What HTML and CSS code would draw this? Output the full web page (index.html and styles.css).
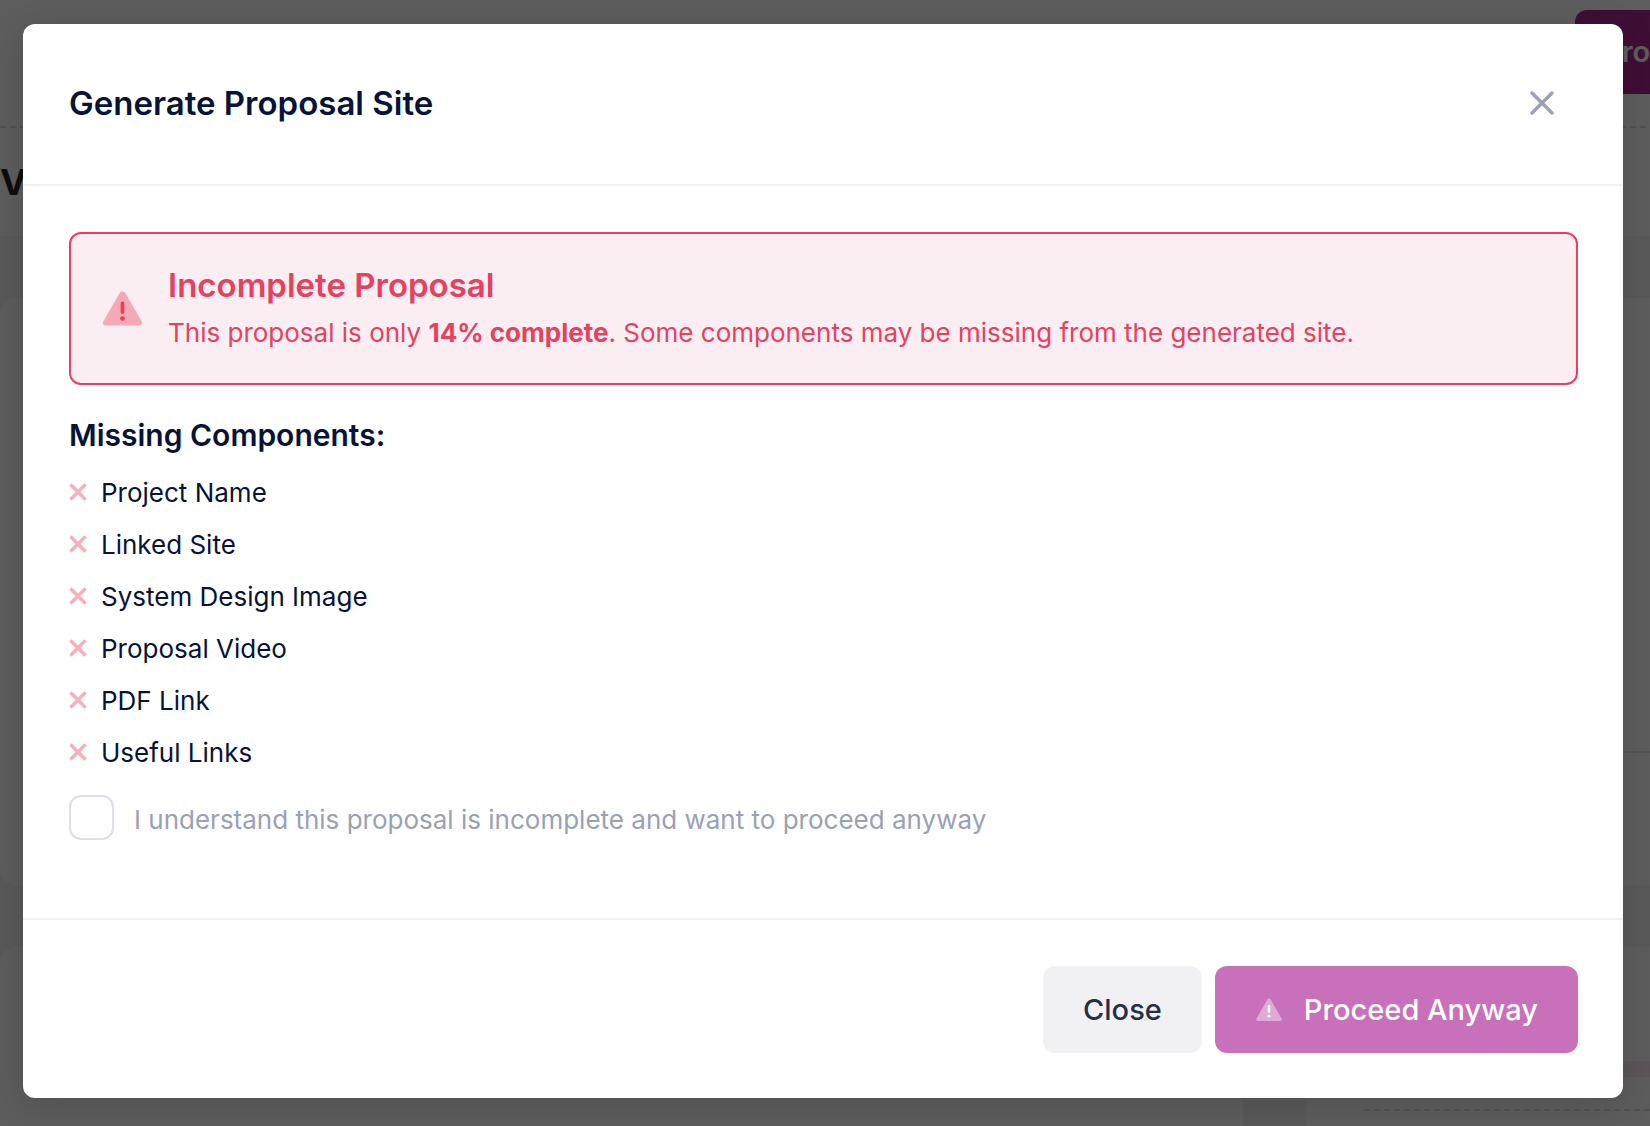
FILE: index.html
```html
<!DOCTYPE html>
<html lang="en">
<head>
    <meta charset="UTF-8">
    <meta name="viewport" content="width=device-width, initial-scale=1.0">
    <title>Generate Proposal Site</title>
    <link rel="stylesheet" href="styles.css">
</head>
<body>

    <!-- Page behind the modal -->
    <div class="page" aria-hidden="true">
        <div class="toolbar">
            <div class="page-action">Prop</div>
        </div>
        <div class="dashed"></div>
        <div class="page-title">V</div>
        <div class="page-content">
            <div class="card card-main">
                <div class="card-line"></div>
            </div>
            <div class="card-row">
                <div class="card card-wide"></div>
                <div class="card card-side">
                    <div class="card-tag"></div>
                    <div class="dashed"></div>
                </div>
            </div>
        </div>
    </div>

    <!-- Modal -->
    <div class="overlay">
        <div class="modal" role="dialog" aria-modal="true" aria-labelledby="modal-title">
            <div class="modal-header">
                <h2 class="modal-title" id="modal-title">Generate Proposal Site</h2>
                <button type="button" class="btn-icon" aria-label="Close dialog">
                    <svg width="24" height="24" viewBox="0 0 24 24"><path d="M2 2L22 22M22 2L2 22"/></svg>
                </button>
            </div>

            <div class="modal-body">
                <div class="alert" role="alert">
                    <svg class="alert-icon" width="52" height="52" viewBox="0 0 52 52">
                        <path class="tri" d="M22.4 10.4C23.8 7.9 27.2 7.9 28.6 10.4L44.5 38C45.7 40.1 44.6 42.5 42 42.5H9C6.4 42.5 5.3 40.1 6.5 38Z"/>
                        <rect class="mark" x="23.6" y="18.5" width="3.8" height="12.5" rx="1.9"/>
                        <circle class="mark" cx="25.5" cy="35.6" r="2.4"/>
                    </svg>
                    <div class="alert-text">
                        <h3 class="alert-title">Incomplete Proposal</h3>
                        <p class="alert-desc">This proposal is only <strong>14% complete</strong>. Some components may be missing from the generated site.</p>
                    </div>
                </div>

                <h4 class="missing-title">Missing Components:</h4>
                <ul class="missing-list">
                    <li><svg width="18" height="18" viewBox="0 0 18 18"><path d="M2.5 2.5L15.5 15.5M15.5 2.5L2.5 15.5"/></svg>Project Name</li>
                    <li><svg width="18" height="18" viewBox="0 0 18 18"><path d="M2.5 2.5L15.5 15.5M15.5 2.5L2.5 15.5"/></svg>Linked Site</li>
                    <li><svg width="18" height="18" viewBox="0 0 18 18"><path d="M2.5 2.5L15.5 15.5M15.5 2.5L2.5 15.5"/></svg>System Design Image</li>
                    <li><svg width="18" height="18" viewBox="0 0 18 18"><path d="M2.5 2.5L15.5 15.5M15.5 2.5L2.5 15.5"/></svg>Proposal Video</li>
                    <li><svg width="18" height="18" viewBox="0 0 18 18"><path d="M2.5 2.5L15.5 15.5M15.5 2.5L2.5 15.5"/></svg>PDF Link</li>
                    <li><svg width="18" height="18" viewBox="0 0 18 18"><path d="M2.5 2.5L15.5 15.5M15.5 2.5L2.5 15.5"/></svg>Useful Links</li>
                </ul>

                <div class="confirm">
                    <input type="checkbox" class="checkbox" id="confirm-incomplete">
                    <label for="confirm-incomplete">I understand this proposal is incomplete and want to proceed anyway</label>
                </div>
            </div>

            <div class="modal-footer">
                <button type="button" class="btn btn-light">Close</button>
                <button type="button" class="btn btn-primary" disabled>
                    <svg width="28" height="28" viewBox="0 0 28 28">
                        <path class="tri" d="M12.4 3.4C13.2 2.1 14.8 2.1 15.6 3.4L26.4 22.3C27.2 23.7 26.5 25 24.9 25H3.1C1.5 25 .8 23.7 1.6 22.3Z"/>
                        <rect class="mark" x="12.7" y="9" width="2.6" height="8" rx="1.3"/>
                        <circle class="mark" cx="14" cy="20" r="1.6"/>
                    </svg>
                    Proceed Anyway
                </button>
            </div>
        </div>
    </div>

    <script>
        const confirmBox = document.getElementById('confirm-incomplete');
        const proceedBtn = document.querySelector('.btn-primary');

        confirmBox.addEventListener('change', () => {
            proceedBtn.disabled = !confirmBox.checked;
        });
    </script>

</body>
</html>
```
FILE: styles.css
```css
* {
    margin: 0;
    padding: 0;
    box-sizing: border-box;
}

body {
    font-family: Inter, sans-serif;
    font-size: 26px;
    line-height: 39px;
    color: #071437;
    background-color: #5d5d5d;
    min-height: 100vh;
    overflow: hidden;
}

/* Page behind the modal */
.page {
    position: absolute;
    inset: 0;
    display: flex;
    flex-direction: column;
    overflow: hidden;
    background-color: #fff;
}

.toolbar {
    display: flex;
    justify-content: flex-end;
    padding: 10px 0 32px;
}

.dashed {
    height: 2px;
    background: repeating-linear-gradient(to right, #dbdfe9 0 6px, transparent 6px 10px);
}

.page-action {
    width: 75px;
    padding: 22px 0 22px 28px;
    overflow: hidden;
    white-space: nowrap;
    font-size: 29px;
    font-weight: 600;
    line-height: 40px;
    color: #fff;
    background-color: #a9278f;
    border-radius: 12px 0 0 12px;
}

.page-title {
    height: 108px;
    padding-top: 35px;
    font-size: 36px;
    font-weight: 700;
    color: #252525;
}

.page-content {
    flex: 1;
    display: flex;
    flex-direction: column;
    gap: 62px;
    padding-top: 62px;
    background-color: #f4f4f4;
}

.card {
    background-color: #fff;
}

.card-main {
    height: 587px;
    padding: 453px 0 0 60px;
    border-radius: 16px 0 0 16px;
}

.card-line {
    border-top: 2px solid #eaeaea;
}

.card-row {
    flex: 1;
    display: flex;
    gap: 63px;
}

.card-wide {
    flex: 1;
    border-radius: 16px 16px 0 0;
}

.card-side {
    width: 344px;
    padding: 114px 0 0 58px;
    border-radius: 16px 0 0 0;
}

.card-tag {
    height: 16px;
    margin-bottom: 32px;
    background-color: #faeaf5;
}

/* Modal */
.overlay {
    position: relative;
    min-height: 100vh;
    padding: 24px 27px 28px 23px;
    background-color: rgba(0, 0, 0, 0.635);
}

.modal {
    background-color: #fff;
    border-radius: 12px;
    box-shadow: 0 8px 36px rgba(0, 0, 0, 0.14);
}

.modal-header {
    display: flex;
    align-items: center;
    justify-content: space-between;
    padding: 43px 45px 45px 46px;
    border-bottom: 2px solid #f1f1f2;
}

.modal-title {
    font-size: 33px;
    font-weight: 600;
    line-height: 40px;
}

.btn-icon {
    display: flex;
    align-items: center;
    justify-content: center;
    width: 72px;
    height: 72px;
    border: 0;
    background: none;
    cursor: pointer;
}

.btn-icon path {
    fill: none;
    stroke: #99a1b7;
    stroke-width: 3.4;
    stroke-linecap: round;
}

.modal-body {
    padding: 46px 45px 46px 46px;
}

.alert {
    display: flex;
    align-items: center;
    gap: 19px;
    padding: 31px 26px;
    color: #e8405f;
    background-color: #fbeef3;
    border: 2px solid #e8405f;
    border-radius: 12px;
}

.alert-icon {
    flex-shrink: 0;
}

.tri {
    fill: currentColor;
    opacity: 0.4;
}

.mark {
    fill: currentColor;
}

.alert-title {
    margin-bottom: 8px;
    font-size: 33px;
    font-weight: 600;
    line-height: 40px;
}

.missing-title {
    margin: 32px 0 13px;
    font-size: 30px;
    font-weight: 600;
    line-height: 36px;
}

.missing-list {
    list-style: none;
}

.missing-list li {
    display: flex;
    align-items: center;
    gap: 14px;
    height: 52px;
}

.missing-list path {
    fill: none;
    stroke: #f7b1be;
    stroke-width: 3.6;
    stroke-linecap: round;
}

.confirm {
    display: flex;
    align-items: center;
    gap: 20px;
    margin: 17px 0 32px;
    color: #99a1b7;
}

.confirm label {
    padding-top: 4px;
}

.checkbox {
    flex-shrink: 0;
    width: 45px;
    height: 45px;
    appearance: none;
    background-color: #fff;
    border: 2px solid #dbdfe9;
    border-radius: 12px;
}

.checkbox:checked {
    background-color: #a9278f;
    border-color: #a9278f;
}

.modal-footer {
    display: flex;
    justify-content: flex-end;
    gap: 13px;
    padding: 46px 45px 45px;
    border-top: 2px solid #f1f1f2;
}

.btn {
    display: flex;
    align-items: center;
    gap: 21px;
    padding: 22px 40px;
    font-family: inherit;
    font-size: 29px;
    font-weight: 500;
    line-height: 43px;
    border: 0;
    border-radius: 12px;
    cursor: pointer;
}

.btn-light {
    color: #252f4a;
    background-color: #f1f1f4;
}

.btn-primary {
    color: #fff;
    background-color: #ad2297;
}

.btn-primary:disabled {
    background-color: #c870ba;
    cursor: default;
}
```
